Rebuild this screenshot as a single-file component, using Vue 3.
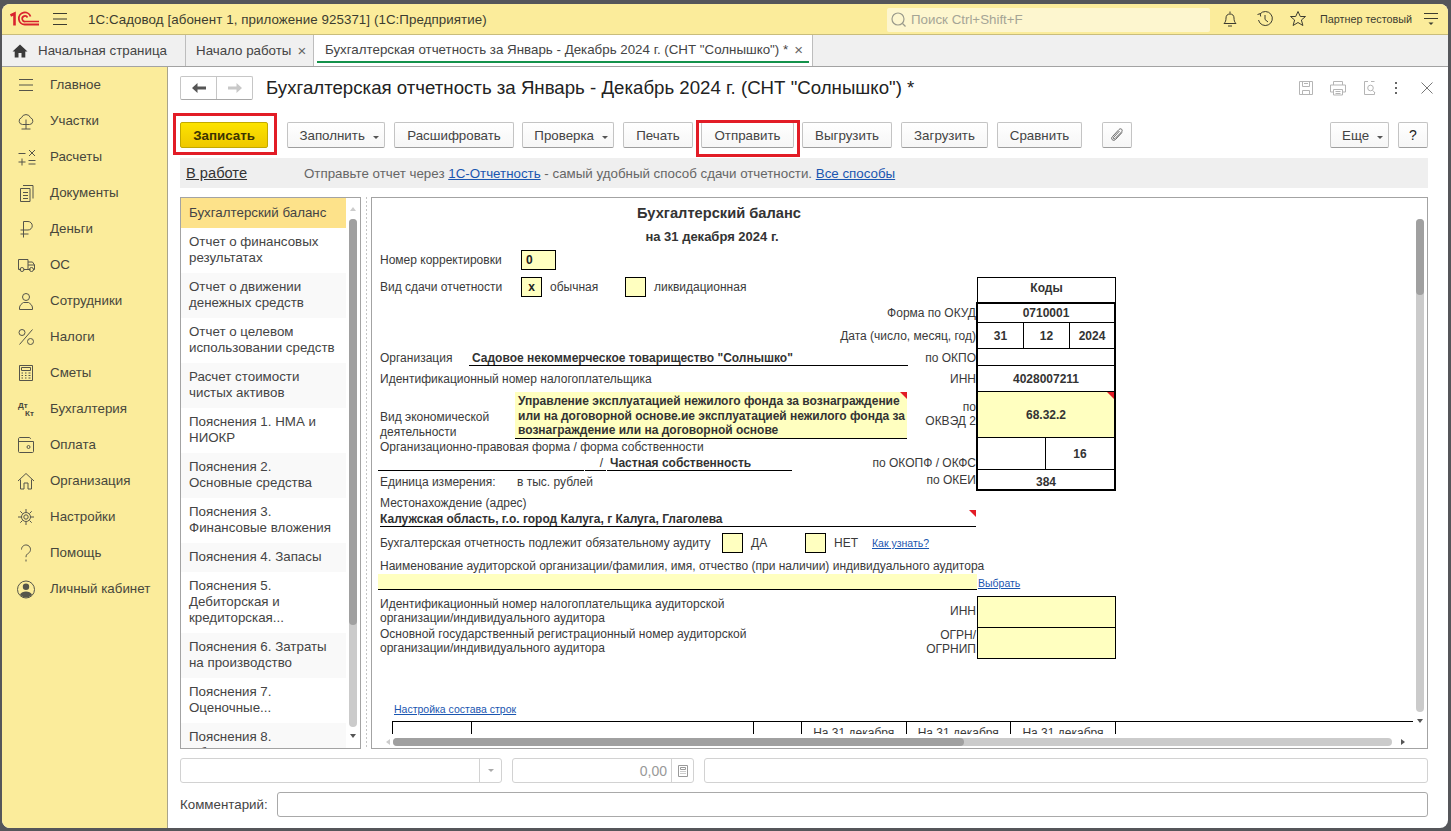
<template>
  <div class="desktop">
    <div class="window">
      <header class="titlebar">
        <svg class="logo" width="32" height="16" viewBox="0 0 32 16" fill="none" stroke="#d9232e">
          <path d="M.5 4.500L4.500 2.500V14.500" stroke-width="2.600" />
          <path d="M29 13.500H15A6 6 0 1 1 20.500 5.500" stroke-width="1.800" />
          <path d="M29 10.500H15.500A2.800 2.800 0 1 1 17.500 6.500" stroke-width="1.700" />
        </svg>
        <svg class="burger" width="16" height="12" viewBox="0 0 16 12" stroke="#3c3c30" stroke-width="1">
          <path d="M1 .5h14M1 6h14M1 11.500h14" />
        </svg>
        <span class="app-title">1С:Садовод [абонент 1, приложение 925371]  (1С:Предприятие)</span>
        <div class="search">
          <svg width="18" height="18" viewBox="0 0 18 18" fill="none" stroke="#9a9a8c" stroke-width="1.200">
            <circle cx="8" cy="8" r="6" />
            <path d="M12.500 12.500l3 3" />
          </svg>
          <span>Поиск Ctrl+Shift+F</span>
        </div>
        <svg class="top-icon bell" width="18" height="18" viewBox="0 0 18 18" fill="none" stroke="#3c3c30">
          <path d="M3 13.500h12c-1.500-1.500-2-3-2-5.500 0-2.500-1.500-4-4-4s-4 1.500-4 4c0 2.500-.5 4-2 5.500z" />
          <path d="M9 1.500v2M7 16h4" />
        </svg>
        <svg class="top-icon history" width="18" height="18" viewBox="0 0 18 18" fill="none" stroke="#3c3c30">
          <path d="M4 4a7 7 0 1 1-1.500 6" />
          <path d="M9 5v4.500l3 2.500M1.500 4.500l2.700-.8.500 2.800" />
        </svg>
        <svg class="top-icon star" width="18" height="18" viewBox="0 0 18 18" fill="none" stroke="#3c3c30">
          <path d="M9 1.500l2.300 5h5.200l-4.100 3.500 1.500 5.500L9 12.500l-4.900 3 1.500-5.500L1.500 6.500h5.200z" />
        </svg>
        <span class="user-name">Партнер тестовый</span>
        <svg class="top-menu" width="16" height="16" viewBox="0 0 16 16" stroke="#3c3c30">
          <path d="M1 2.500h14M1 7.500h14" fill="none" />
          <path d="M5.500 11.500h5l-2.500 2.500z" fill="#3c3c30" stroke="none" />
        </svg>
      </header>

      <nav class="tabs">
        <div class="tab tab-home">
          <svg width="16" height="14" viewBox="0 0 16 14" fill="#3a3a3a">
            <path d="M8 .5L.5 7.500h2.200V13.500h3.800V9h3v4.500h3.800V7.500h2.200z" />
          </svg>
          <span>Начальная страница</span>
        </div>
        <div class="tab tab-start">
          <span>Начало работы</span>
          <span class="tab-close">×</span>
        </div>
        <div class="tab tab-active">
          <span>Бухгалтерская отчетность за Январь - Декабрь 2024 г. (СНТ "Солнышко") *</span>
          <span class="tab-close">×</span>
        </div>
      </nav>

      <div class="body">
        <aside class="sidebar">
          <div v-for="item in menu" :key="item.name" class="side-item">
            <svg width="20" height="20" viewBox="0 0 20 20" fill="none" stroke="#55554a" stroke-width="1">
              <path v-if="item.icon" :d="item.icon" />
              <path v-if="item.solid" :d="item.solid" fill="#55554a" stroke="none" />
              <template v-if="item.name === 'Бухгалтерия'">
                <text x="2" y="9" class="dt">Дт</text>
                <text x="9" y="17" class="dt">Кт</text>
              </template>
            </svg>
            <span>{{ item.name }}</span>
          </div>
        </aside>

        <main class="main">
          <div class="form-head">
            <div class="nav-buttons">
              <span class="nav-btn">
                <svg width="16" height="12" viewBox="0 0 16 12" fill="#555">
                  <path d="M1 6l5.500-5v3.500H15v3H6.500V11z" />
                </svg>
              </span>
              <span class="nav-btn">
                <svg width="16" height="12" viewBox="0 0 16 12" fill="#c8c8c8">
                  <path d="M15 6L9.500 1v3.500H1v3h8.500V11z" />
                </svg>
              </span>
            </div>
            <h1>Бухгалтерская отчетность за Январь - Декабрь 2024 г. (СНТ "Солнышко") *</h1>
            <div class="head-icons">
              <svg width="16" height="16" viewBox="0 0 16 16" fill="none" stroke="#b5b5b5">
                <path d="M1.500 1.500h13v13h-13zM4.500 1.500v5h7v-5M4.500 14.500v-4h7v4" />
                <path d="M6 3.500h4" />
              </svg>
              <svg width="18" height="16" viewBox="0 0 18 16" fill="none" stroke="#b5b5b5">
                <path d="M4.500 5V1.500h9V5M4.500 12H1.500V5h15v7h-3M4.500 9.500h9v5.500h-9zM6.500 11.500h5M6.500 13.500h5" />
              </svg>
              <svg width="16" height="16" viewBox="0 0 16 16" fill="none" stroke="#b5b5b5">
                <path d="M6 1.500H2.500v13h10V12M9 1.500h3.500" />
                <circle cx="8.500" cy="8" r="2.800" />
                <path d="M10.500 10.300l2.500 2.500" />
              </svg>
              <svg width="6" height="14" viewBox="0 0 6 14" fill="#666">
                <rect x="2" y="1" width="2" height="2" />
                <rect x="2" y="6" width="2" height="2" />
                <rect x="2" y="11" width="2" height="2" />
              </svg>
              <svg class="head-close" width="14" height="14" viewBox="0 0 14 14" stroke="#777">
                <path d="M1.500 1.500l11 11M12.500 1.500l-11 11" />
              </svg>
            </div>
          </div>

          <div class="toolbar">
            <button class="btn btn-primary marked marked-tall">Записать</button>
            <button class="btn w-fill has-caret">Заполнить <i class="caret"></i></button>
            <button class="btn w-decode">Расшифровать</button>
            <button class="btn w-check has-caret">Проверка <i class="caret"></i></button>
            <button class="btn w-print">Печать</button>
            <button class="btn w-send marked">Отправить</button>
            <button class="btn w-export">Выгрузить</button>
            <button class="btn w-import">Загрузить</button>
            <button class="btn w-compare">Сравнить</button>
            <button class="btn w-clip">
              <svg width="16" height="16" viewBox="0 0 16 16" fill="none" stroke="#666">
                <path d="M13 5.500L6.500 12.500c-1 1-2.500 1-3.300.2s-.7-2.200.3-3.200l6.500-7c.8-.8 2-.9 2.700-.2s.6 1.900-.2 2.700L6 11.500c-.4.400-1 .5-1.400.1s-.3-1 .1-1.400l5.800-6.200" />
              </svg>
            </button>
            <button class="btn w-more has-caret">Еще <i class="caret"></i></button>
            <button class="btn w-help">?</button>
          </div>

          <div class="info">
            <a class="status">В работе</a>
            <span class="info-text">Отправьте отчет через <a>1С-Отчетность</a> - самый удобный способ сдачи отчетности. <a>Все способы</a></span>
          </div>

          <div class="panels">
            <div class="list-panel">
              <div class="list">
                <div v-for="(row, i) in sections" :key="row" class="list-item" :class="{ selected: i === 0, odd: i > 0 && i % 2 === 0 }">{{ row }}</div>
              </div>
              <div class="list-scroll">
                <i class="arrow up"></i>
                <div class="list-track"><div class="list-thumb"></div></div>
                <i class="arrow down"></i>
              </div>
            </div>
            <div class="splitter"></div>

            <div class="report-panel">
              <div class="sheet-wrap">
                <div class="sheet">
                  <div class="sheet-title">Бухгалтерский баланс</div>
                  <div class="sheet-sub">на 31 декабря 2024 г.</div>

                  <div class="top-block">
                    <div class="left-col">
                      <div class="row r-correction">
                        <span class="lbl-141">Номер корректировки</span>
                        <span class="box box-wide">0</span>
                      </div>
                      <div class="row r-kind">
                        <span class="lbl-141">Вид сдачи отчетности</span>
                        <span class="box">х</span>
                        <span class="kind-a">обычная</span>
                        <span class="box"></span>
                        <span class="kind-b">ликвидационная</span>
                      </div>
                      <div class="row r-org">
                        <span class="lbl-89">Организация</span>
                        <span class="org-value">Садовое некоммерческое товарищество "Солнышко"</span>
                      </div>
                      <div class="row r-inn">Идентификационный номер налогоплательщика</div>
                      <div class="row r-activity">
                        <span class="activity-label">Вид экономической<br />деятельности</span>
                        <div class="activity-value corner">Управление эксплуатацией нежилого фонда за вознаграждение или на договорной основе.ие эксплуатацией нежилого фонда за вознаграждение или на договорной основе</div>
                      </div>
                      <div class="row r-form">Организационно-правовая форма / форма собственности</div>
                      <div class="row r-owner">
                        <span class="seg seg-a"></span>
                        <span class="seg seg-b">/</span>
                        <span class="seg seg-c">Частная собственность</span>
                      </div>
                      <div class="row r-unit">
                        <span class="lbl-137">Единица измерения:</span>
                        <span>в тыс. рублей</span>
                      </div>
                    </div>

                    <div class="codes">
                      <div class="code-head">Коды</div>
                      <div class="code-row h-okud">
                        <span class="code-label">Форма по ОКУД</span>
                        <div class="code-cells top-edge">0710001</div>
                      </div>
                      <div class="code-row h-date">
                        <span class="code-label">Дата (число, месяц, год)</span>
                        <div class="code-cells split">
                          <span class="c-day">31</span>
                          <span class="c-month">12</span>
                          <span class="c-year">2024</span>
                        </div>
                      </div>
                      <div class="code-row h-okpo">
                        <span class="code-label">по ОКПО</span>
                        <div class="code-cells"></div>
                      </div>
                      <div class="code-row h-inn">
                        <span class="code-label">ИНН</span>
                        <div class="code-cells">4028007211</div>
                      </div>
                      <div class="code-row h-okved">
                        <span class="code-label two-line">по<br />ОКВЭД 2</span>
                        <div class="code-cells yellow corner">68.32.2</div>
                      </div>
                      <div class="code-row h-okopf">
                        <span class="code-label at-end">по ОКОПФ / ОКФС</span>
                        <div class="code-cells split">
                          <span class="c-opf"></span>
                          <span class="c-fs">16</span>
                        </div>
                      </div>
                      <div class="code-row h-okei">
                        <span class="code-label okei-label">по ОКЕИ</span>
                        <div class="code-cells bottom-edge">384</div>
                      </div>
                    </div>
                  </div>

                  <div class="address-label">Местонахождение (адрес)</div>
                  <div class="address corner">Калужская область, г.о. город Калуга, г Калуга, Глаголева</div>

                  <div class="row r-audit">
                    <span class="lbl-audit">Бухгалтерская отчетность подлежит обязательному аудиту</span>
                    <span class="box"></span>
                    <span class="audit-yes">ДА</span>
                    <span class="box"></span>
                    <span class="audit-no">НЕТ</span>
                    <a class="small-link">Как узнать?</a>
                  </div>
                  <div class="auditor-label">Наименование аудиторской организации/фамилия, имя, отчество (при наличии) индивидуального аудитора</div>
                  <div class="auditor-line">
                    <div class="auditor-input"></div>
                    <a class="small-link">Выбрать</a>
                  </div>

                  <div class="auditor-ids">
                    <div class="id-row">
                      <span class="id-text">Идентификационный номер налогоплательщика аудиторской организации/индивидуального аудитора</span>
                      <span class="id-code">ИНН</span>
                      <div class="id-box"></div>
                    </div>
                    <div class="id-row">
                      <span class="id-text">Основной государственный регистрационный номер аудиторской организации/индивидуального аудитора</span>
                      <span class="id-code">ОГРН/<br />ОГРНИП</span>
                      <div class="id-box id-box-next"></div>
                    </div>
                  </div>

                  <a class="small-link rows-link">Настройка состава строк</a>
                  <div class="balance-head">
                    <span class="col col-a"></span>
                    <span class="col col-b"></span>
                    <span class="col col-c"></span>
                    <span class="col col-d">На 31 декабря</span>
                    <span class="col col-d">На 31 декабря</span>
                    <span class="col col-e">На 31 декабря</span>
                  </div>
                </div>
                <div class="v-scroll">
                  <div class="v-track"><div class="v-thumb"></div></div>
                  <i class="arrow down"></i>
                </div>
              </div>
              <div class="h-scroll">
                <i class="arrow left"></i>
                <div class="h-track"><div class="h-thumb"></div></div>
                <i class="arrow right"></i>
              </div>
            </div>
          </div>

          <div class="fields">
            <div class="field f-select">
              <span class="field-side"><i class="caret pale"></i></span>
            </div>
            <div class="field f-sum">
              <span class="sum">0,00</span>
              <span class="field-side">
                <svg width="12" height="14" viewBox="0 0 12 14" fill="none" stroke="#999">
                  <path d="M1.500 1.500h9v11h-9zM3.500 3.500h5v2h-5zM3.500 7.500h1M5.500 7.500h1M7.500 7.500h1M3.500 9.500h1M5.500 9.500h1M7.500 9.500h1" />
                </svg>
              </span>
            </div>
            <div class="field f-rest"></div>
          </div>

          <div class="comment">
            <span>Комментарий:</span>
            <div class="comment-input"></div>
          </div>
        </main>
      </div>
    </div>
  </div>
</template>

<script setup>
const menu = [
  { name: 'Главное', icon: 'M3 4.500h14M3 10h14M3 15.500h14' },
  { name: 'Участки', icon: 'M6.500 13.500a3.500 3.500 0 0 1-1-6.800 4.800 4.800 0 0 1 9 0 3.500 3.500 0 0 1-1 6.800zM10 8.500v9.500M5.500 18h9' },
  { name: 'Расчеты', icon: 'M2.500 6.500h7M13 3l6 6M19 3l-6 6M2.500 15h7M6 11.500v7M12.500 13.500h7M12.500 17h7' },
  { name: 'Документы', icon: 'M4.500 5.500h9.500v13H4.500zM7 2.500h10v13M7 9.500h5M7 12.500h5M7 15.500h5' },
  { name: 'Деньги', icon: 'M7.500 18.500V2.500h4.500a4 4 0 0 1 0 8.500H4.500M4.500 15h8' },
  { name: 'ОС', icon: 'M2.500 14.500v-10h9.500v10M12 7h4.500l2 3v4.500H17M5 14.500h-2.500M7.500 14.500h7M12 10h6.500M6 16.500a2 2 0 1 0 0-4 2 2 0 0 0 0 4zM15.500 16.500a2 2 0 1 0 0-4 2 2 0 0 0 0 4z' },
  { name: 'Сотрудники', icon: 'M10 9.500a3.500 3.500 0 1 0 0-7 3.500 3.500 0 0 0 0 7zM3.500 18.500v-1.500c0-3 2.500-4.500 4-5.500h5c1.500 1 4 2.500 4 5.500v1.500z' },
  { name: 'Налоги', icon: 'M16.500 2.500L3.500 17.500M6 8.500a3 3 0 1 0 0-6 3 3 0 0 0 0 6zM14.500 17.500a3 3 0 1 0 0-6 3 3 0 0 0 0 6z' },
  { name: 'Сметы', icon: 'M3.500 2.500h13v15h-13zM5.500 4.500h9v3h-9zM5.500 10h1.500M9 10h1.500M12.500 10h2M5.500 12.500h1.500M9 12.500h1.500M12.500 12.500h2M5.500 15h1.500M9 15h1.500M12.500 15h2' },
  { name: 'Бухгалтерия' },
  { name: 'Оплата', icon: 'M2.500 4c0-1 .5-1.500 1.500-1.500h9c1 0 1.500.5 1.500 1.500M2.500 4v12.500c0 .6.4 1 1 1h13c.6 0 1-.4 1-1V6.500h-15M12.500 13.500a1.500 1.500 0 1 0 0-3 1.500 1.500 0 0 0 0 3z' },
  { name: 'Организация', icon: 'M2 10l8-7.500 8 7.500M4.500 8.500v9.500h3.500v-6h4v6h3.500V8.500' },
  { name: 'Настройки', icon: 'M10 14.500a4.500 4.500 0 1 0 0-9 4.500 4.500 0 0 0 0 9zM10 12.200a2.200 2.200 0 1 0 0-4.400 2.200 2.200 0 0 0 0 4.400zM10 2v3M10 15v3M2 10h3M15 10h3M4.300 4.300l2.200 2.200M13.500 13.500l2.200 2.200M15.700 4.300l-2.200 2.200M6.500 13.500l-2.200 2.200' },
  { name: 'Помощь', icon: 'M5.500 6.500a4.500 4.500 0 1 1 7 3.700c-1.600 1-2.500 1.800-2.500 4M10 16.500v2' },
  { name: 'Личный кабинет', icon: 'M10 19a8.500 8.500 0 1 0 0-17 8.500 8.500 0 0 0 0 17z', solid: 'M10 11a3.200 3.200 0 1 0 0-6.400 3.200 3.200 0 0 0 0 6.400zM4 15.500c1-2 3.500-3 6-3s5 1 6 3c-1.500 1.800-3.500 3-6 3s-4.500-1.200-6-3z' }
]

const sections = [
  'Бухгалтерский баланс',
  'Отчет о финансовых результатах',
  'Отчет о движении денежных средств',
  'Отчет о целевом использовании средств',
  'Расчет стоимости чистых активов',
  'Пояснения 1. НМА и НИОКР',
  'Пояснения 2. Основные средства',
  'Пояснения 3. Финансовые вложения',
  'Пояснения 4. Запасы',
  'Пояснения 5. Дебиторская и кредиторская...',
  'Пояснения 6. Затраты на производство',
  'Пояснения 7. Оценочные...',
  'Пояснения 8. Обеспечения...'
]
</script>

<style>
html, body {
  margin: 0;
  overflow: hidden;
}
</style>

<style scoped>
.desktop {
  width: 1451px;
  height: 831px;
  box-sizing: border-box;
  padding: 4px 3px 3px 2px;
  background: #55565a;
  font-family: "Liberation Sans", Arial, sans-serif;
  font-size: 13.330px;
  color: #3a3a3a;
}

.window {
  height: 100%;
  display: flex;
  flex-direction: column;
  overflow: hidden;
  background: #fff;
  border-radius: 8px;
}

/* title bar */
.titlebar {
  height: 30px;
  flex: none;
  display: flex;
  align-items: center;
  background: #fbec9b;
  border-bottom: 1px solid #c9bd7c;
}

.logo {
  margin-left: 8px;
}

.burger {
  margin-left: 10px;
}

.app-title {
  margin-left: 20px;
  width: 799px;
  white-space: pre;
  letter-spacing: .07px;
  color: #3c3c30;
}

.search {
  width: 323px;
  height: 24px;
  margin-top: 1px;
  display: flex;
  align-items: center;
  gap: 3px;
  padding-left: 3px;
  box-sizing: border-box;
  background: #fdf6cf;
  border-radius: 2px;
  color: #a5a596;
}

.top-icon {
  flex: none;
}

.bell {
  margin-left: 11px;
}

.history {
  margin-left: 17px;
}

.star {
  margin-left: 15px;
}

.user-name {
  margin-left: 13px;
  width: 103px;
  font-size: 10.800px;
  color: #3c3c30;
}

/* tabs */
.tabs {
  height: 31px;
  flex: none;
  display: flex;
  background: #f0f0f0;
  border-bottom: 1px solid #a3a3a3;
}

.tab {
  display: flex;
  align-items: center;
  box-sizing: border-box;
  border-right: 1px solid #bdbdbd;
  color: #444;
}

.tab-home {
  width: 184px;
  padding-left: 10px;
  gap: 10px;
}

.tab-start {
  width: 128px;
  padding-left: 10px;
}

.tab-active {
  position: relative;
  width: 499px;
  padding-left: 11px;
  padding-bottom: 2px;
  background: #fff;
}

.tab-active::after {
  content: "";
  position: absolute;
  left: 3px;
  right: 3px;
  bottom: 3px;
  height: 2px;
  background: #14924b;
}

.tab-close {
  margin-left: 6px;
  font-size: 15px;
  color: #666;
}

.body {
  flex: 1;
  min-height: 0;
  display: flex;
}

/* left menu */
.sidebar {
  width: 165px;
  flex: none;
  background: #fbec9b;
  border-right: 1px solid #a9a48a;
}

.side-item {
  height: 36px;
  display: flex;
  align-items: center;
  padding-left: 14px;
  gap: 14px;
  color: #47473c;
}

.side-item span {
  padding-bottom: 2px;
}

.side-item svg {
  flex: none;
}

.dt {
  font-size: 8px;
  font-weight: bold;
  font-family: "Liberation Sans", Arial, sans-serif;
  fill: #47473c;
  stroke: none;
}

/* main area */
.main {
  flex: 1;
  min-width: 0;
  padding: 9px 20px 0 12px;
}

.form-head {
  height: 24px;
  display: flex;
  align-items: center;
}

.nav-buttons {
  display: flex;
  height: 24px;
  border: 1px solid #c6c6c6;
  border-bottom-color: #a8a8a8;
  border-radius: 2px;
  box-sizing: border-box;
}

.nav-btn {
  width: 35px;
  display: flex;
  align-items: center;
  justify-content: center;
}

.nav-btn + .nav-btn {
  border-left: 1px solid #c6c6c6;
}

h1 {
  margin: 0 0 0 13px;
  font-size: 18.670px;
  font-weight: normal;
  color: #222;
  white-space: nowrap;
}

.head-icons {
  margin-left: auto;
  display: flex;
  align-items: center;
  gap: 15px;
}

.head-close {
  margin-left: 6px;
  margin-right: -6px;
}

.toolbar {
  margin-top: 22px;
  height: 26px;
  display: flex;
}

.btn {
  position: relative;
  flex: none;
  height: 26px;
  margin-right: 9px;
  padding: 0;
  box-sizing: border-box;
  border: 1px solid #c4c4c4;
  border-bottom-color: #9e9e9e;
  border-radius: 2px;
  background: linear-gradient(#fff, #f6f6f6);
  font: 13.330px "Liberation Sans", Arial, sans-serif;
  color: #444;
}

.has-caret {
  padding-left: 6px;
}

.btn-primary {
  width: 88px;
  margin-right: 19px;
  border-color: #c2a900;
  background: linear-gradient(#fce300, #efc800);
  font-weight: bold;
  color: #3d3500;
}

.w-fill { width: 98px; }
.w-decode { width: 120px; margin-right: 8px; }
.w-check { width: 92px; }
.w-print { width: 70px; margin-right: 8px; }
.w-send { width: 93px; margin-right: 8px; }
.w-export { width: 90px; }
.w-import { width: 87px; }
.w-compare { width: 85px; margin-right: 20px; }
.w-clip { width: 30px; margin-right: 198px; display: flex; align-items: center; justify-content: center; }
.w-more { width: 59px; }
.w-help { width: 30px; margin-right: 0; font-size: 14px; color: #222; }

.marked::after {
  content: "";
  position: absolute;
  left: -8px;
  right: -10px;
  top: -3px;
  bottom: -10px;
  border: 3px solid #e21c26;
  pointer-events: none;
}

.marked-tall::after {
  top: -10px;
  bottom: -8px;
}

.w-send.marked::after {
  left: -6px;
  right: -7px;
}

.caret {
  display: inline-block;
  margin-left: 4px;
  vertical-align: 1px;
  border: 3px solid transparent;
  border-top: 3px solid #555;
  border-bottom: 0;
}

.caret.pale {
  margin: 0;
  border-top-color: #aaa;
}

.info {
  margin-top: 10px;
  height: 30px;
  display: flex;
  align-items: center;
  background: #efefef;
}

.status {
  width: 118px;
  margin-left: 6px;
  font-size: 14.670px;
  color: #333;
  text-decoration: underline;
}

.info-text {
  color: #666;
}

.info-text a {
  color: #1a56b0;
  text-decoration: underline;
}

.panels {
  margin-top: 9px;
  height: 552px;
  display: flex;
}

.list-panel {
  width: 181px;
  flex: none;
  display: flex;
  box-sizing: border-box;
  border: 1px solid #a3a3a3;
  overflow: hidden;
}

.list {
  width: 165px;
  flex: none;
  overflow: hidden;
}

.list-item {
  box-sizing: border-box;
  padding: 6px 8px 7px;
  line-height: 16px;
  color: #444;
  background: #fff;
}

.list-item.selected {
  padding: 7px 8px;
  background: #fde28a;
}

.list-item.odd {
  background: #f9f9f9;
}

.list-scroll {
  flex: 1;
  display: flex;
  flex-direction: column;
  align-items: center;
  padding-top: 9px;
}

.list-track {
  width: 8px;
  height: 508px;
  margin-top: 8px;
  background: #cbcbcb;
  border-radius: 4px;
}

.list-thumb {
  height: 406px;
  background: #a0a0a0;
  border-radius: 4px;
}

.arrow {
  display: block;
  width: 0;
  height: 0;
  border: 3px solid transparent;
}

.arrow.up {
  border-top: 0;
  border-bottom: 4px solid #ccc;
}

.arrow.down {
  margin-top: 7px;
  border-bottom: 0;
  border-top: 4px solid #555;
}

.arrow.left {
  border-left: 0;
  border-right: 4px solid #ccc;
}

.arrow.right {
  border-right: 0;
  border-left: 4px solid #555;
}

.splitter {
  width: 10px;
  flex: none;
  background: linear-gradient(#c4c4c4 50%, transparent 50%) 5px 0 / 1px 4px repeat-y;
}

.report-panel {
  flex: 1;
  min-width: 0;
  box-sizing: border-box;
  border: 1px solid #a3a3a3;
}

.sheet-wrap {
  height: 536px;
  display: flex;
}

.sheet {
  flex: 1;
  min-width: 0;
  overflow: hidden;
  padding-left: 8px;
  font-size: 12px;
  color: #3a3a3a;
}

.sheet-title {
  width: 678px;
  height: 30px;
  line-height: 30px;
  text-align: center;
  font-size: 14.670px;
  font-weight: bold;
  color: #333;
}

.sheet-sub {
  width: 664px;
  height: 18px;
  line-height: 18px;
  text-align: center;
  font-size: 13px;
  font-weight: bold;
  color: #333;
}

.top-block {
  margin-top: 4px;
  display: flex;
  height: 241px;
}

.left-col {
  width: 528px;
  flex: none;
}

.row {
  display: flex;
  align-items: center;
  white-space: nowrap;
}

.lbl-141 { width: 141px; flex: none; }
.lbl-89 { width: 89px; flex: none; line-height: 19px; }
.lbl-137 { width: 137px; flex: none; }

.r-correction { height: 20px; margin-bottom: 7px; }
.r-kind { height: 20px; }
.r-org { height: 17px; margin-top: 52px; align-items: flex-start; }
.r-inn { height: 26px; }
.r-activity { height: 47px; align-items: flex-end; }
.r-form { height: 16px; }
.r-owner { height: 16px; align-items: stretch; margin-left: -2px; }
.r-unit { height: 21px; }

.box {
  width: 21px;
  height: 20px;
  flex: none;
  box-sizing: border-box;
  border: 1px solid #000;
  background: #ffffc0;
  font-weight: bold;
  line-height: 18px;
  text-align: center;
  color: #222;
}

.box-wide {
  width: 35px;
  padding-left: 4px;
  text-align: left;
}

.kind-a { width: 75px; padding-left: 8px; box-sizing: border-box; margin-right: 8px; }
.kind-b { margin-left: 8px; }

.org-value {
  flex: 1;
  height: 17px;
  box-sizing: border-box;
  padding-left: 3px;
  border-bottom: 1px solid #000;
  line-height: 19px;
  font-weight: bold;
  color: #333;
}

.activity-label {
  width: 135px;
  flex: none;
  line-height: 15px;
  margin-bottom: -1px;
}

.activity-value {
  position: relative;
  width: 392px;
  height: 47px;
  box-sizing: border-box;
  padding: 2px 0 0 3px;
  background: #ffffc0;
  border-bottom: 1px solid #000;
  font-weight: bold;
  line-height: 14.500px;
  white-space: normal;
  color: #333;
}

.corner::after {
  content: "";
  position: absolute;
  top: 0;
  right: 0;
  border-top: 7px solid #e21c26;
  border-left: 7px solid transparent;
}

.seg {
  box-sizing: border-box;
  height: 16px;
  border-bottom: 1px solid #000;
  line-height: 17px;
  font-weight: bold;
  color: #333;
}

.seg-a { width: 206px; margin-right: 1px; }
.seg-b { width: 21px; margin-right: 1px; text-align: right; padding-right: 3px; font-weight: normal; }
.seg-c { width: 185px; padding-left: 3px; }

/* codes */
.codes {
  width: 208px;
  flex: none;
  padding-top: 27px;
  box-sizing: border-box;
}

.code-head {
  width: 139px;
  height: 25px;
  margin-left: 69px;
  box-sizing: border-box;
  border: 1px solid #000;
  border-bottom: 0;
  line-height: 20px;
  text-align: center;
  font-weight: bold;
  color: #333;
}

.code-row {
  display: flex;
  align-items: center;
}

.code-label {
  width: 68px;
  flex: none;
  display: flex;
  justify-content: flex-end;
  white-space: nowrap;
}

.code-label.two-line {
  display: block;
  text-align: right;
  line-height: 14px;
  margin-top: -2px;
}

.code-label.at-end {
  align-self: flex-end;
}

.okei-label {
  padding-bottom: 2px;
}

.code-cells {
  width: 140px;
  height: 100%;
  box-sizing: border-box;
  display: flex;
  align-items: center;
  justify-content: center;
  border-left: 2px solid #000;
  border-right: 2px solid #000;
  border-bottom: 1px solid #000;
  font-weight: bold;
  color: #333;
  position: relative;
}

.code-cells.top-edge { border-top: 2px solid #000; }
.code-cells.bottom-edge { border-bottom: 2px solid #000; padding-top: 4px; }
.code-cells.yellow { background: #ffffc0; }
.code-cells.split { justify-content: flex-start; align-items: stretch; }
.code-cells.split span { display: flex; align-items: center; justify-content: center; }

.h-okud { height: 21px; }
.h-date { height: 26px; }
.h-okpo { height: 17px; }
.h-inn { height: 26px; }
.h-okved { height: 46px; }
.h-okopf { height: 32px; }
.h-okei { height: 21px; }

.c-day { width: 45px; border-right: 1px solid #000; }
.c-month { width: 45px; border-right: 1px solid #000; }
.c-year { flex: 1; }
.c-opf { width: 67px; border-right: 1px solid #000; }
.c-fs { flex: 1; }

/* address and audit */
.address-label {
  margin-top: 5px;
  height: 15px;
  line-height: 15px;
}

.address {
  position: relative;
  width: 596px;
  height: 16px;
  box-sizing: border-box;
  padding-top: 1px;
  border-bottom: 1px solid #000;
  line-height: 14px;
  font-weight: bold;
  color: #333;
}

.address.corner::after {
  top: -1px;
  border-width: 7px 0 0 7px;
  border-style: solid;
  border-color: #e21c26 transparent transparent transparent;
}

.r-audit {
  height: 20px;
  margin-top: 6px;
}

.lbl-audit { width: 342px; flex: none; }
.audit-yes { width: 62px; padding-left: 8px; box-sizing: border-box; }
.audit-no { width: 46px; padding-left: 8px; box-sizing: border-box; }

.small-link {
  font-size: 10.500px;
  color: #1a56b0;
  text-decoration: underline;
}

.auditor-label {
  margin-top: 6px;
  height: 15px;
  line-height: 15px;
  white-space: nowrap;
}

.auditor-line {
  display: flex;
  align-items: flex-end;
  margin-left: -2px;
}

.auditor-input {
  width: 599px;
  height: 16px;
  box-sizing: border-box;
  background: #ffffc0;
  border-bottom: 1px solid #000;
  margin-right: 1px;
}

.auditor-line .small-link {
  line-height: 12px;
  margin-bottom: 1px;
}

.auditor-ids {
  margin-top: 6px;
}

.id-row {
  display: flex;
  align-items: stretch;
  height: 31px;
}

.id-row + .id-row {
  margin-top: 1px;
}

.id-text {
  width: 420px;
  flex: none;
  line-height: 14px;
  padding-top: 1px;
  box-sizing: border-box;
}

.id-row + .id-row .id-text {
  padding-top: 0;
  margin-top: -1px;
}

.id-code {
  width: 176px;
  flex: none;
  text-align: right;
  line-height: 14px;
  padding-top: 8px;
  box-sizing: border-box;
}

.id-row + .id-row .id-code {
  padding-top: 0;
}

.id-box {
  width: 139px;
  height: 32px;
  margin-left: 1px;
  box-sizing: border-box;
  border: 1px solid #000;
  background: #ffffc0;
}

.id-box-next {
  height: 31px;
  border-top: 0;
}

.rows-link {
  display: block;
  margin: 44px 0 0 14px;
  height: 13px;
  line-height: 13px;
}

.balance-head {
  margin: 5px 0 0 12px;
  height: 20px;
  display: flex;
  border-top: 1px solid #000;
  white-space: nowrap;
  text-align: center;
}

.col {
  box-sizing: border-box;
  border-left: 1px solid #000;
  padding-top: 4px;
}

.col-a { width: 79px; }
.col-b { width: 282px; }
.col-c { width: 48px; }
.col-d { width: 104.500px; }
.col-e { width: 106px; border-right: 1px solid #000; }

.v-scroll {
  width: 14px;
  flex: none;
  display: flex;
  flex-direction: column;
  align-items: center;
  padding-top: 21px;
}

.v-track {
  width: 8px;
  height: 493px;
  background: #cbcbcb;
  border-radius: 4px;
}

.v-thumb {
  height: 76px;
  background: #a0a0a0;
  border-radius: 4px;
}

.h-scroll {
  height: 15px;
  display: flex;
  align-items: center;
  padding-left: 14px;
}

.h-scroll .arrow.left {
  margin-right: 3px;
}

.h-track {
  width: 999px;
  height: 8px;
  background: #cbcbcb;
  border-radius: 4px;
}

.h-thumb {
  width: 571px;
  height: 8px;
  background: #a0a0a0;
  border-radius: 4px;
}

.h-scroll .arrow.right {
  margin-left: 9px;
}

/* bottom fields */
.fields {
  margin-top: 9px;
  height: 25px;
  display: flex;
  gap: 10px;
}

.field {
  box-sizing: border-box;
  display: flex;
  justify-content: flex-end;
  align-items: stretch;
  border: 1px solid #d2d2d2;
  border-radius: 3px;
}

.f-select { width: 322px; }
.f-sum { width: 182px; }
.f-rest { flex: 1; }

.field-side {
  width: 21px;
  display: flex;
  align-items: center;
  justify-content: center;
  border-left: 1px solid #d2d2d2;
}

.sum {
  align-self: center;
  margin-right: 4px;
  font-size: 14px;
  color: #999;
}

.comment {
  margin-top: 9px;
  height: 25px;
  display: flex;
  align-items: center;
  color: #444;
}

.comment > span {
  width: 97px;
  flex: none;
}

.comment-input {
  flex: 1;
  height: 25px;
  box-sizing: border-box;
  border: 1px solid #a9a9a9;
  border-radius: 3px;
}
</style>
